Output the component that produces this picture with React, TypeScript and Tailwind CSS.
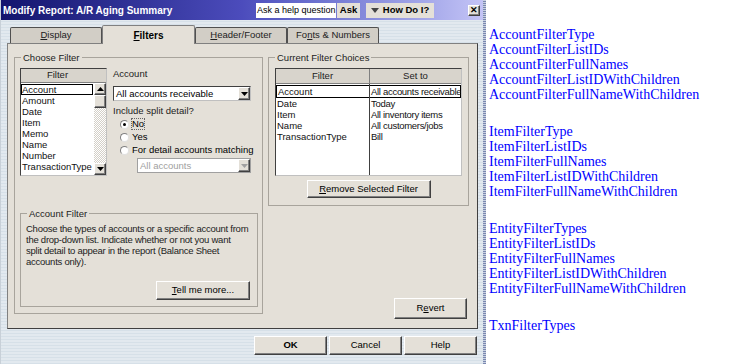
import React from "react";

const ui = "font-['Liberation_Sans',Arial,sans-serif] text-[9.5px] text-black";

function Btn({ className = "", children }: { className?: string; children: React.ReactNode }) {
  return (
    <div
      className={`flex items-center justify-center bg-[#e4e0d8] border border-t-white border-l-white border-r-[#404040] border-b-[#404040] shadow-[inset_-1px_-1px_#808080] ${className}`}
    >
      {children}
    </div>
  );
}

function Group({ label, className = "", children }: { label: string; className?: string; children?: React.ReactNode }) {
  return (
    <div className={`relative border border-[#a8a49c] ${className}`}>
      <span className="absolute -top-[6px] left-[6px] bg-[#e4e0d8] px-[2px] leading-[11px] text-[#222]">{label}</span>
      {children}
    </div>
  );
}

function Arrow({ up = false, gray = false }: { up?: boolean; gray?: boolean }) {
  return (
    <svg width="7" height="4" viewBox="0 0 7 4" className={up ? "rotate-180" : ""}>
      <path d="M0 0h7L3.5 4z" fill={gray ? "#a0a0a0" : "#000"} />
    </svg>
  );
}

function Radio({ checked = false }: { checked?: boolean }) {
  return (
    <div className="w-[9px] h-[9px] rounded-full bg-white border border-[#808080] border-r-[#e0e0e0] border-b-[#e0e0e0] flex items-center justify-center">
      {checked && <div className="w-[3px] h-[3px] rounded-full bg-black" />}
    </div>
  );
}

const filterItems = ["Account", "Amount", "Date", "Item", "Memo", "Name", "Number", "TransactionType"];
const choices: [string, string][] = [
  ["Account", "All accounts receivable"],
  ["Date", "Today"],
  ["Item", "All inventory items"],
  ["Name", "All customers/jobs"],
  ["TransactionType", "Bill"],
];

const groups = [
  ["AccountFilterType", "AccountFilterListIDs", "AccountFilterFullNames", "AccountFilterListIDWithChildren", "AccountFilterFullNameWithChildren"],
  ["ItemFilterType", "ItemFilterListIDs", "ItemFilterFullNames", "ItemFilterListIDWithChildren", "ItemFilterFullNameWithChildren"],
  ["EntityFilterTypes", "EntityFilterListIDs", "EntityFilterFullNames", "EntityFilterListIDWithChildren", "EntityFilterFullNameWithChildren"],
  ["TxnFilterTypes"],
];

const helpLines = [
  "Choose the types of accounts or a specific account from",
  "the drop-down list. Indicate whether or not you want",
  "split detail to appear in the report (Balance Sheet",
  "accounts only).",
];

export default function App() {
  return (
    <div className="flex w-[756px] h-[364px] bg-white overflow-hidden">
      {/* Dialog */}
      <div className={`flex flex-col w-[483px] h-[364px] bg-[repeating-linear-gradient(0deg,#d6e0e8_0px,#d6e0e8_1px,#e2e9ef_1px,#e2e9ef_3px)] border-l border-[#c8d0d8] ${ui}`}>
        {/* Title bar */}
        <div className="flex items-center h-[20px] bg-linear-to-r from-[#14146e] via-[#4c4cbc] to-[#c4c4f6] pl-[2px] pr-[3px]">
          <span className="text-white font-bold text-[10px]">Modify Report: A/R Aging Summary</span>
          <div className="ml-auto flex items-center">
            <div className="w-[80px] h-[15px] bg-white pl-[1px] text-[9px] leading-[15px] whitespace-nowrap overflow-hidden">Ask a help question</div>
            <Btn className="ml-[1px] w-[23px] h-[15px] font-bold border-0 shadow-none bg-[#d8d4cc]">Ask</Btn>
            <Btn className="ml-[6px] w-[68px] h-[15px] font-bold gap-[4px] border-0 shadow-none bg-[#d8d4cc]">
              <svg width="8" height="5" viewBox="0 0 8 5"><path d="M0 0h8L4 5z" fill="#444" /></svg>
              <span>How Do I?</span>
            </Btn>
            <div className="w-[34px]" />
            <Btn className="w-[12px] h-[11px] font-bold text-[9px] leading-none">✕</Btn>
          </div>
        </div>

        {/* Tabs */}
        <div className="flex items-end h-[23px] pl-[9px]">
          {["Display", "Filters", "Header/Footer", "Fonts & Numbers"].map((t) =>
            t === "Filters" ? (
              <div
                key={t}
                className="relative z-10 -mb-[1px] w-[93px] h-[19px] bg-[#e4e0d8] border border-[#808080] border-b-0 rounded-t-[2px] flex items-center justify-center font-bold text-[10px]"
              >
                <span><span className="underline">F</span>ilters</span>
              </div>
            ) : (
              <div
                key={t}
                className="w-[92px] h-[16px] bg-[#d2cec6] border border-[#505050] border-b-0 rounded-t-[2px] flex items-center justify-center text-[#222]"
              >
                {t === "Display" && <span><span className="underline">D</span>isplay</span>}
                {t === "Header/Footer" && <span><span className="underline">H</span>eader/Footer</span>}
                {t === "Fonts & Numbers" && <span>Fo<span className="underline">n</span>ts &amp; Numbers</span>}
              </div>
            )
          )}
        </div>

        {/* Panel */}
        <div className="ml-[6px] w-[471px] h-[286px] bg-[#e4e0d8] border border-[#808080] border-r-[#404040] border-b-[#404040] flex pt-[13px] pl-[6px]">
          {/* Choose Filter */}
          <Group label="Choose Filter" className="w-[249px] h-[257px] flex flex-col pt-[10px] pl-[5px]">
            <div className="flex">
              {/* filter list */}
              <div className="w-[87px] h-[108px] bg-white border border-[#404040] border-r-[#c0c0c0] border-b-[#c0c0c0] flex flex-col">
                <div className="h-[14px] bg-[#d8d4cc] border-b border-[#808080] flex items-center justify-center text-[#222]">
                  <span className="mr-[12px]">Filter</span>
                </div>
                <div className="flex flex-1">
                  <div className="flex-1 flex flex-col pt-[1px] text-[#111]">
                    {filterItems.map((f, i) => (
                      <div
                        key={f}
                        className={`h-[11px] leading-[11px] pl-[1px] whitespace-nowrap ${i === 0 ? "outline outline-1 outline-black -outline-offset-1 mr-[1px]" : ""}`}
                      >
                        {f}
                      </div>
                    ))}
                  </div>
                  <div className="w-[12px] flex flex-col bg-[repeating-conic-gradient(#ffffff_0%_25%,#d4d0c8_0%_50%)] bg-[length:2px_2px]">
                    <Btn className="h-[12px]"><Arrow up /></Btn>
                    <Btn className="h-[13px]"><span /></Btn>
                    <div className="flex-1" />
                    <Btn className="h-[12px]"><Arrow /></Btn>
                  </div>
                </div>
              </div>

              {/* account options */}
              <div className="ml-[6px] flex flex-col">
                <div className="leading-[12px] text-[#222]">Account</div>
                <div className="mt-[6px] w-[138px] h-[15px] bg-white border border-[#404040] border-r-[#c0c0c0] border-b-[#c0c0c0] flex items-center">
                  <span className="flex-1 pl-[2px] leading-[13px]">All accounts receivable</span>
                  <Btn className="w-[12px] h-[13px]"><Arrow /></Btn>
                </div>
                <div className="mt-[4px] leading-[12px] text-[#222]">Include split detail?</div>
                <div className="flex flex-col ml-[7px] mt-[1px] gap-[1px]">
                  <div className="flex items-center gap-[3px] h-[12px]">
                    <Radio checked />
                    <span className="outline outline-1 outline-dotted outline-[#666] leading-[10px]">No</span>
                  </div>
                  <div className="flex items-center gap-[3px] h-[12px]"><Radio /><span>Yes</span></div>
                  <div className="flex items-center gap-[3px] h-[12px]"><Radio /><span>For detail accounts matching</span></div>
                </div>
                <div className="ml-[24px] mt-[2px] w-[114px] h-[15px] bg-white border border-[#a0a0a0] flex items-center">
                  <span className="flex-1 pl-[2px] leading-[13px] text-[#a0a0a0]">All accounts</span>
                  <Btn className="w-[12px] h-[13px] border-[#c0c0c0]"><Arrow gray /></Btn>
                </div>
              </div>
            </div>

            {/* Account Filter */}
            <Group label="Account Filter" className="mt-[37px] w-[238px] h-[94px] flex flex-col pt-[9px] pl-[5px] pr-[3px] pb-[6px]">
              <p className="leading-[11px] text-[#222] tracking-[-0.25px] whitespace-nowrap">
                {helpLines.map((l, i) => (
                  <React.Fragment key={i}>
                    {l}
                    {i < helpLines.length - 1 && <br />}
                  </React.Fragment>
                ))}
              </p>
              <Btn className="mt-auto self-end w-[94px] h-[19px] mr-[4px]">
                <span><span className="underline">T</span>ell me more...</span>
              </Btn>
            </Group>
          </Group>

          {/* Right column */}
          <div className="ml-[5px] flex flex-col">
            <Group label="Current Filter Choices" className="w-[201px] h-[149px] flex flex-col items-center pt-[10px]">
              <div className="w-[187px] h-[108px] bg-white border border-[#404040] border-r-[#c0c0c0] border-b-[#c0c0c0] flex flex-col">
                <div className="h-[15px] bg-[#d8d4cc] border-b border-[#808080] flex text-[#222]">
                  <div className="w-[94px] flex items-center justify-center border-r border-[#808080]">Filter</div>
                  <div className="flex-1 flex items-center justify-center">Set to</div>
                </div>
                <div className="flex flex-1 text-[#111]">
                  <div className="w-[94px] flex flex-col pt-[1px] border-r border-[#404040]">
                    {choices.map(([k], i) => (
                      <div key={k} className={`h-[11px] leading-[11px] pl-[1px] ${i === 0 ? "border-y border-l border-black h-[13px] leading-[11px]" : ""}`}>{k}</div>
                    ))}
                  </div>
                  <div className="flex-1 flex flex-col pt-[1px] overflow-hidden tracking-[-0.3px]">
                    {choices.map(([k, v], i) => (
                      <div key={k} className={`h-[11px] leading-[11px] pl-[1px] whitespace-nowrap ${i === 0 ? "border-y border-r border-black h-[13px] leading-[11px]" : ""}`}>{v}</div>
                    ))}
                  </div>
                </div>
              </div>
              <Btn className="mt-[4px] w-[124px] h-[18px]">
                <span><span className="underline">R</span>emove Selected Filter</span>
              </Btn>
            </Group>
            <Btn className="mt-[92px] ml-[126px] w-[73px] h-[21px]">
              <span>R<span className="underline">e</span>vert</span>
            </Btn>
          </div>
        </div>

        {/* Bottom buttons */}
        <div className="flex mt-[7px] ml-[253px] gap-[2px]">
          <Btn className="w-[73px] h-[19px] font-bold">OK</Btn>
          <Btn className="w-[73px] h-[19px]">Cancel</Btn>
          <Btn className="w-[73px] h-[19px]">Help</Btn>
        </div>
      </div>

      {/* Window edge */}
      <div className="w-[3px] h-full bg-[repeating-linear-gradient(0deg,#7a88b0_0px,#7a88b0_1px,#c8d0e0_1px,#c8d0e0_2px)]" />

      {/* Field list */}
      <div className="flex flex-col pl-[3px] pt-[27px] font-['Liberation_Serif',serif] text-[14px] leading-[15px] text-[#0000ff] gap-[22px]">
        {groups.map((g, gi) => (
          <div key={gi} className="flex flex-col">
            {g.map((n) => (
              <div key={n} className="h-[15px] whitespace-nowrap">{n}</div>
            ))}
          </div>
        ))}
      </div>
    </div>
  );
}
